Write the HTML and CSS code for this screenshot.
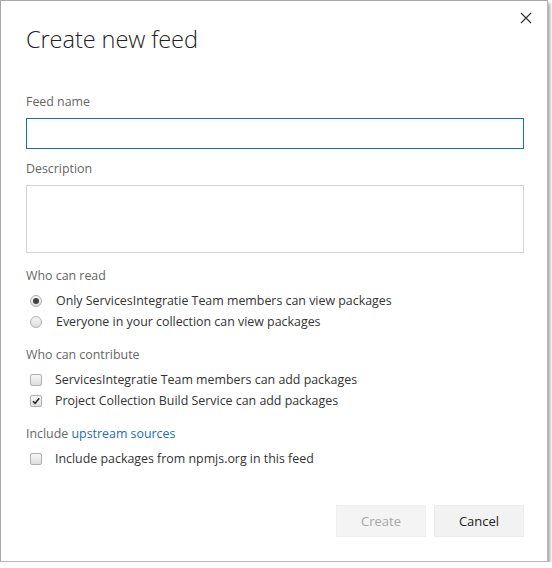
FILE: index.html
```html
<!DOCTYPE html>
<html>
<head>
<meta charset="utf-8">
<link rel="stylesheet" href="styles.css">
</head>
<body>
<div class="dialog">
  <div class="header">
    <h1 class="title">Create new feed</h1>
    <button class="close" aria-label="Close">
      <svg width="12" height="12" viewBox="0 0 12 12"><path d="M1 1L11 11M11 1L1 11" stroke="#333" stroke-width="1.2" fill="none"/></svg>
    </button>
  </div>
  <div class="body">
    <label class="label">Feed name</label>
    <input class="input focus" type="text">
    <label class="label desc-label">Description</label>
    <textarea class="textarea"></textarea>

    <div class="group">
      <div class="label">Who can read</div>
      <div class="option"><span class="radio checked"></span><span>Only ServicesIntegratie Team members can view packages</span></div>
      <div class="option"><span class="radio"></span><span>Everyone in your collection can view packages</span></div>
    </div>

    <div class="group">
      <div class="label">Who can contribute</div>
      <div class="option"><span class="check"></span><span>ServicesIntegratie Team members can add packages</span></div>
      <div class="option"><span class="check checked"><svg width="10" height="10" viewBox="0 0 10 10"><path d="M2 5.2L4.1 7.4L8.2 2.2" stroke="#222" stroke-width="1.6" fill="none"/></svg></span><span>Project Collection Build Service can add packages</span></div>
    </div>

    <div class="group">
      <div class="label">Include <a class="link" href="#">upstream sources</a></div>
      <div class="option"><span class="check"></span><span>Include packages from npmjs.org in this feed</span></div>
    </div>
  </div>
  <div class="footer">
    <button class="btn disabled">Create</button>
    <button class="btn">Cancel</button>
  </div>
</div>
</body>
</html>
```
FILE: styles.css
```css
html, body {
  margin: 0;
  padding: 0;
  background: #fff;
}
body {
  font-family: "Segoe UI", "Open Sans", "Liberation Sans", sans-serif;
  font-size: 12.4px;
  color: #333;
}
.dialog {
  box-sizing: border-box;
  width: 548px;
  height: 562px;
  border-left: 1px solid #a8a8a8;
  border-top: 1px solid #a8a8a8;
  border-right: 1px solid #b8b8b8;
  border-bottom: 1px solid #b8b8b8;
  box-shadow: 2px 3px 3px rgba(0,0,0,0.35);
  background: #fff;
  display: flex;
  flex-direction: column;
  padding: 0 23px 0 25px;
}
.header {
  display: flex;
  justify-content: space-between;
  align-items: flex-start;
}
.title {
  margin: 22px 0 0 0;
  font-weight: 300;
  font-size: 23.6px;
  line-height: 32px;
  color: #222;
  letter-spacing: -0.1px;
}
.close {
  border: 0;
  background: transparent;
  padding: 0;
  margin: 11px -8px 0 0;
  width: 12px;
  height: 12px;
  display: flex;
}
.body {
  display: flex;
  flex-direction: column;
  margin-top: 38px;
}
.label {
  color: #666;
  font-size: 12.4px;
  line-height: 18px;
  display: block;
}
.input {
  box-sizing: border-box;
  margin-top: 7px;
  height: 31px;
  width: 498px;
  border: 1px solid #1a6db3;
  outline: none;
  padding: 0 6px;
  font: inherit;
}
.desc-label {
  margin-top: 11px;
}
.textarea {
  box-sizing: border-box;
  margin-top: 7px;
  height: 68px;
  width: 498px;
  border: 1px solid #d4d4d4;
  resize: none;
  outline: none;
  font: inherit;
}
.group {
  margin-top: 14px;
  display: flex;
  flex-direction: column;
}
.option {
  display: flex;
  align-items: center;
  height: 21px;
  color: #333;
  font-size: 12.4px;
}
.group .label + .option {
  margin-top: 5px;
}
.radio {
  box-sizing: border-box;
  width: 12px;
  height: 12px;
  border-radius: 50%;
  border: 1px solid #b0b0b0;
  background: linear-gradient(#f4f4f4, #dedede);
  margin: 0 14px 0 4px;
  position: relative;
  flex: none;
}
.radio.checked::after {
  content: "";
  position: absolute;
  left: 2px;
  top: 2px;
  width: 6px;
  height: 6px;
  border-radius: 50%;
  background: #444;
}
.check {
  box-sizing: border-box;
  width: 12px;
  height: 12px;
  border-radius: 2px;
  border: 1px solid #b0b0b0;
  background: linear-gradient(#f6f6f6, #dedede);
  margin: 0 13px 0 4px;
  display: flex;
  align-items: center;
  justify-content: center;
  flex: none;
}
.link {
  color: #1e6cb6;
  text-decoration: none;
}
.footer {
  margin-top: auto;
  margin-bottom: 24px;
  display: flex;
  justify-content: flex-end;
  gap: 8px;
}
.btn {
  box-sizing: border-box;
  width: 90px;
  height: 32px;
  border: 1px solid #ececec;
  background: #f2f2f2;
  color: #222;
  font: inherit;
  font-size: 13px;
}
.btn.disabled {
  color: #a6a6a6;
  background: #f4f4f4;
  border-color: #f0f0f0;
}
```
